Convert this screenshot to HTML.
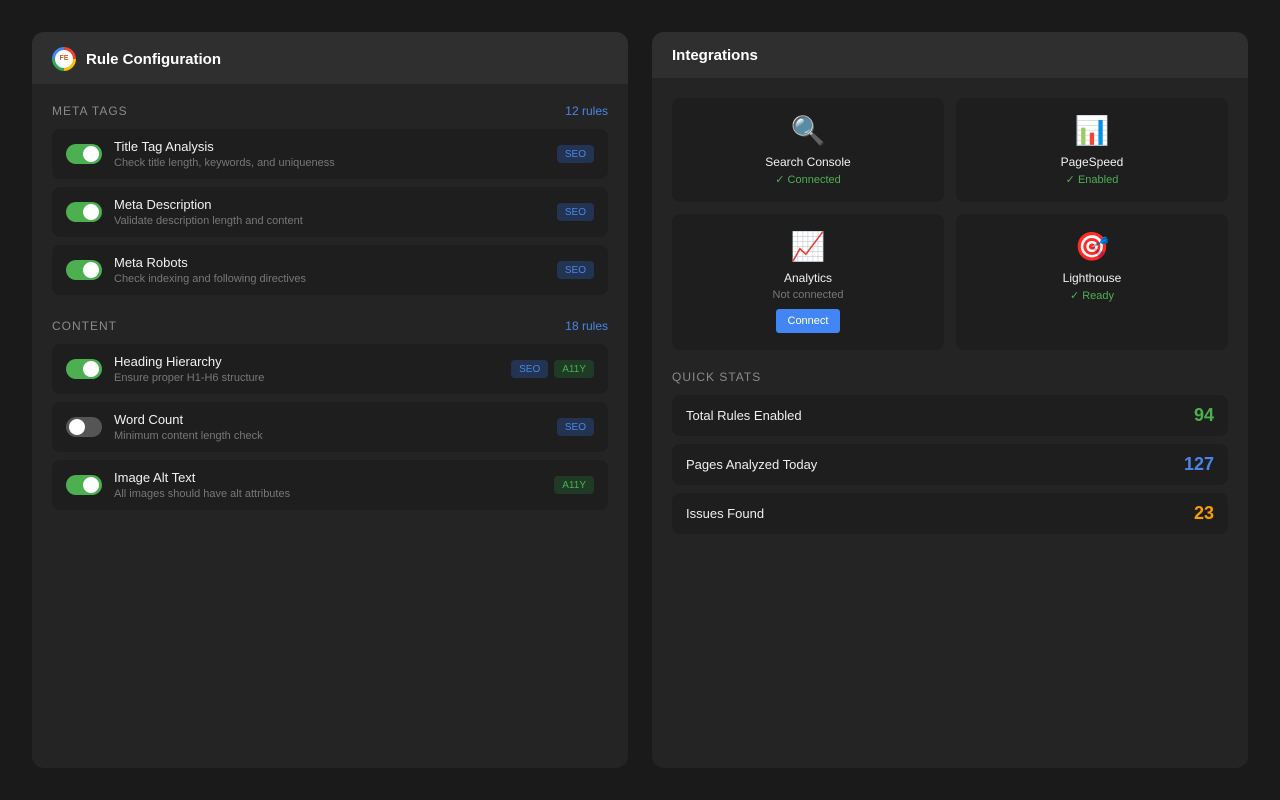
<!DOCTYPE html>
<html><head><meta charset="utf-8"><style>
*{box-sizing:border-box;margin:0;padding:0}
body{width:1280px;height:800px;background:#1a1a1a;font-family:"Liberation Sans",Roboto,sans-serif;color:#eee;position:relative;overflow:hidden}
.panel{position:absolute;top:32px;width:596px;height:736px;background:#242424;border-radius:12px;overflow:hidden}
.hd{background:#2f2f2f;display:flex;align-items:center;padding-left:20px;font-weight:bold;font-size:15px;color:#fff}
.sec{position:absolute;left:20px;right:20px;display:flex;justify-content:space-between;font-size:12px;letter-spacing:1px;color:#8a8a8a}
.sec span{color:#4a86e8;letter-spacing:0}
.row{position:absolute;left:20px;width:556px;height:50px;background:#1e1e1e;border-radius:8px}
.tg{position:absolute;left:14px;top:15px;width:36px;height:20px;border-radius:10px;background:#4caf50}
.tg::after{content:"";position:absolute;right:3px;top:2px;width:16px;height:16px;border-radius:50%;background:#fff}
.tg.off{background:#555}.tg.off::after{right:auto;left:3px}
.t{position:absolute;left:62px;top:10px;font-size:13px;color:#f0f0f0}
.d{position:absolute;left:62px;top:28px;font-size:11px;color:#777}
.tags{position:absolute;right:14px;top:16px;display:flex;gap:6px}
.tag{height:18px;padding:0 8px;border-radius:4px;font-size:10px;display:flex;align-items:center}
.seo{background:#233452;color:#4a86e8}.a11y{background:#1f3a25;color:#4caf50}
.card{position:absolute;width:272px;background:#1e1e1e;border-radius:8px;text-align:center}
.ic{font-size:28px;margin-top:16px;height:34px;line-height:34px;font-family:"Noto Color Emoji",sans-serif}
.cn{font-size:12px;color:#f0f0f0;margin-top:7px}
.cs{font-size:11px;color:#4caf50;margin-top:4px}
.btn{display:inline-block;margin-top:8px;background:#4285f4;color:#fff;font-size:11px;width:64px;height:24px;line-height:24px;border-radius:3px}
.stat{position:absolute;left:20px;width:556px;height:41px;background:#1e1e1e;border-radius:8px;display:flex;justify-content:space-between;align-items:center;padding:0 14px;font-size:13px}
.stat b{font-size:18px}
</style></head><body>
<div class="panel" style="left:32px">
 <div class="hd" style="height:52px">
  <div style="width:24px;height:24px;border-radius:50%;background:conic-gradient(#ea4335 0 25%,#fbbc05 25% 50%,#34a853 50% 75%,#4285f4 75%);display:flex;align-items:center;justify-content:center;margin-right:10px;margin-top:1px"><div style="width:18px;height:18px;border-radius:50%;background:#fff;font-size:7px;color:#c0602a;text-align:center;line-height:18px">FE</div></div>
  <span style="margin-top:2px">Rule Configuration</span></div>
 <div class="sec" style="top:72px">META TAGS<span>12 rules</span></div>
 <div class="row" style="top:97px"><div class="tg"></div><div class="t">Title Tag Analysis</div><div class="d">Check title length, keywords, and uniqueness</div><div class="tags"><div class="tag seo">SEO</div></div></div>
 <div class="row" style="top:155px"><div class="tg"></div><div class="t">Meta Description</div><div class="d">Validate description length and content</div><div class="tags"><div class="tag seo">SEO</div></div></div>
 <div class="row" style="top:213px"><div class="tg"></div><div class="t">Meta Robots</div><div class="d">Check indexing and following directives</div><div class="tags"><div class="tag seo">SEO</div></div></div>
 <div class="sec" style="top:287px">CONTENT<span>18 rules</span></div>
 <div class="row" style="top:312px"><div class="tg"></div><div class="t">Heading Hierarchy</div><div class="d">Ensure proper H1-H6 structure</div><div class="tags"><div class="tag seo">SEO</div><div class="tag a11y">A11Y</div></div></div>
 <div class="row" style="top:370px"><div class="tg off"></div><div class="t">Word Count</div><div class="d">Minimum content length check</div><div class="tags"><div class="tag seo">SEO</div></div></div>
 <div class="row" style="top:428px"><div class="tg"></div><div class="t">Image Alt Text</div><div class="d">All images should have alt attributes</div><div class="tags"><div class="tag a11y">A11Y</div></div></div>
</div>
<div class="panel" style="left:652px">
 <div class="hd" style="height:46px">Integrations</div>
 <div class="card" style="left:20px;top:66px;height:104px"><div class="ic">🔍</div><div class="cn">Search Console</div><div class="cs">✓ Connected</div></div>
 <div class="card" style="left:304px;top:66px;height:104px"><div class="ic">📊</div><div class="cn">PageSpeed</div><div class="cs">✓ Enabled</div></div>
 <div class="card" style="left:20px;top:182px;height:136px"><div class="ic">📈</div><div class="cn">Analytics</div><div class="cs" style="color:#777">Not connected</div><div class="btn">Connect</div></div>
 <div class="card" style="left:304px;top:182px;height:136px"><div class="ic">🎯</div><div class="cn">Lighthouse</div><div class="cs">✓ Ready</div></div>
 <div class="sec" style="top:338px">QUICK STATS</div>
 <div class="stat" style="top:363px">Total Rules Enabled<b style="color:#4caf50">94</b></div>
 <div class="stat" style="top:412px">Pages Analyzed Today<b style="color:#4a86e8">127</b></div>
 <div class="stat" style="top:461px">Issues Found<b style="color:#f5a000">23</b></div>
</div>
</body></html>
